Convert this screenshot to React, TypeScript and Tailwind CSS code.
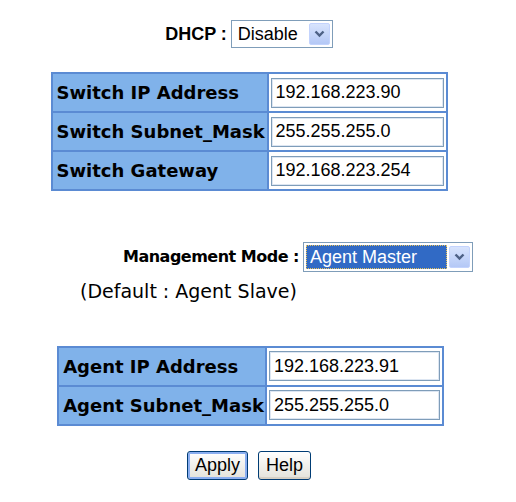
import React from "react";

function Chevron() {
  return (
    <div className="w-[21px] h-[22px] rounded-[2px] bg-gradient-to-b from-[#d8e4fd] to-[#b4c8f6] border border-[#c3d3fd] flex items-center justify-center">
      <svg width="11" height="8" viewBox="0 0 11 8">
        <path d="M1.5 1.5 L5.5 5.5 L9.5 1.5" fill="none" stroke="#4d6185" strokeWidth="2.4" />
      </svg>
    </div>
  );
}

function TextBox({ value, width }: { value: string; width: string }) {
  return (
    <div
      className={`${width} h-[30px] bg-white border border-[#7f9db9] shadow-[inset_0_0_0_1px_#dde6f2] flex items-center px-[4px] font-['Liberation_Sans',Arial,sans-serif] text-[18px] text-black`}
    >
      {value}
    </div>
  );
}

function InfoTable({
  rows,
  labelWidth,
  inputWidth,
}: {
  rows: [string, string][];
  labelWidth: string;
  inputWidth: string;
}) {
  return (
    <table className="border-collapse border-2 border-[#5b8bd3]">
      <tbody>
        {rows.map(([label, value]) => (
          <tr key={label} className="h-[39px]">
            <td
              className={`${labelWidth} bg-[#80b2ea] border-2 border-[#5b8bd3] pl-[4px] pr-[1px] font-['DejaVu_Sans',Verdana,sans-serif] font-bold text-[18px] text-black whitespace-nowrap`}
            >
              {label}
            </td>
            <td className="bg-white border-2 border-[#5b8bd3] px-[2px]">
              <TextBox value={value} width={inputWidth} />
            </td>
          </tr>
        ))}
      </tbody>
    </table>
  );
}

function XpButton({ label, active }: { label: string; active?: boolean }) {
  return (
    <button
      className={`h-[29px] px-[7px] rounded-[3px] border border-[#003c74] bg-gradient-to-b from-white to-[#e3e2da] font-['Liberation_Sans',Arial,sans-serif] text-[18px] text-black leading-none ${
        active ? "shadow-[inset_0_0_0_2px_#8aaef0]" : "shadow-[inset_0_-2px_0_#d6d0c5]"
      }`}
    >
      {label}
    </button>
  );
}

export default function App() {
  return (
    <div className="w-[516px] h-[502px] bg-white overflow-hidden">
      <div className="w-[498px] flex flex-col items-center pt-[20px]">
        {/* DHCP */}
        <div className="flex items-center gap-[4px]">
          <span className="font-['Liberation_Sans',Arial,sans-serif] font-bold text-[18px] text-black">DHCP :</span>
          <div className="w-[102px] h-[28px] border border-[#7f9db9] bg-white flex items-center justify-between pl-[6px] pr-[2px]">
            <span className="font-['Liberation_Sans',Arial,sans-serif] text-[18px] text-black">Disable</span>
            <Chevron />
          </div>
        </div>

        <div className="mt-[24px]">
          <InfoTable
            labelWidth="w-[216px]"
            inputWidth="w-[173px]"
            rows={[
              ["Switch IP Address", "192.168.223.90"],
              ["Switch Subnet_Mask", "255.255.255.0"],
              ["Switch Gateway", "192.168.223.254"],
            ]}
          />
        </div>
      </div>

      {/* Management mode */}
      <div className="pl-[80px] mt-[51px]">
        <div className="flex items-center">
          <div className="w-[223px] flex justify-end pr-[4px]">
            <span className="font-['DejaVu_Sans',Verdana,sans-serif] font-bold text-[16px] tracking-[-0.5px] text-black">Management Mode :</span>
          </div>
          <div className="w-[170px] h-[30px] border border-[#7f9db9] bg-white flex items-center justify-between p-[2px]">
            <div className="flex-1 h-full bg-[#316ac5] border border-dotted border-[#e8c35a] flex items-center px-[3px]">
              <span className="font-['Liberation_Sans',Arial,sans-serif] text-[18px] text-white">Agent Master</span>
            </div>
            <div className="ml-[2px]">
              <Chevron />
            </div>
          </div>
        </div>
        <div className="mt-[5px] font-['DejaVu_Sans',Verdana,sans-serif] text-[19px] text-black">(Default : Agent Slave)</div>
      </div>

      <div className="w-[498px] flex flex-col items-center">
        <div className="mt-[40px] ml-[3px]">
          <InfoTable
            labelWidth="w-[203px]"
            inputWidth="w-[171px]"
            rows={[
              ["Agent IP Address", "192.168.223.91"],
              ["Agent Subnet_Mask", "255.255.255.0"],
            ]}
          />
        </div>

        <div className="mt-[25px] flex gap-[10px]">
          <XpButton label="Apply" active />
          <XpButton label="Help" />
        </div>
      </div>
    </div>
  );
}
